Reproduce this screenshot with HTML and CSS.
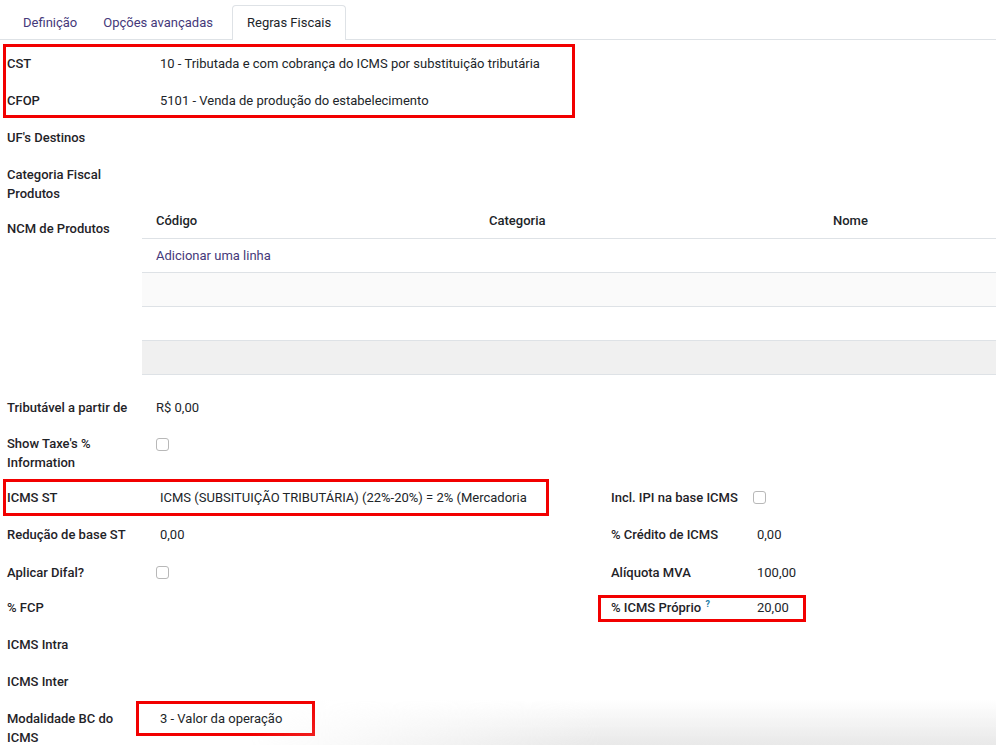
FILE: index.html
```html
<!DOCTYPE html>
<html lang="pt-BR">
<head>
    <meta charset="UTF-8">
    <title>Posição Fiscal - Regras Fiscais</title>
    <link rel="stylesheet" href="styles.css">
</head>
<body>

    <ul class="tabs">
        <li class="tab">Definição</li>
        <li class="tab">Opções avançadas</li>
        <li class="tab active">Regras Fiscais</li>
    </ul>

    <div class="sheet">
        <div class="row">
            <div class="label">CST</div>
            <div class="value text">10 - Tributada e com cobrança do ICMS por substituição tributária</div>
        </div>
        <div class="row">
            <div class="label">CFOP</div>
            <div class="value text">5101 - Venda de produção do estabelecimento</div>
        </div>
        <div class="row">
            <div class="label">UF's Destinos</div>
            <div class="value"></div>
        </div>
        <div class="row two">
            <div class="label">Categoria Fiscal Produtos</div>
            <div class="value"></div>
        </div>
        <div class="row ncm">
            <div class="label">NCM de Produtos</div>
            <div class="value">
                <table class="lines">
                    <thead>
                        <tr>
                            <th class="col-code">Código</th>
                            <th class="col-cat">Categoria</th>
                            <th>Nome</th>
                        </tr>
                    </thead>
                    <tbody>
                        <tr><td colspan="3"><a class="add-line">Adicionar uma linha</a></td></tr>
                        <tr class="light"><td colspan="3"></td></tr>
                        <tr><td colspan="3"></td></tr>
                        <tr class="grey"><td colspan="3"></td></tr>
                    </tbody>
                </table>
            </div>
        </div>
        <div class="row">
            <div class="label">Tributável a partir de</div>
            <div class="value text flush">R$ 0,00</div>
        </div>
        <div class="row two snug">
            <div class="label">Show Taxe's % Information</div>
            <div class="value"><span class="check"></span></div>
        </div>

        <div class="split">
            <div class="group left">
                <div class="row">
                    <div class="label">ICMS ST</div>
                    <div class="value text clip">ICMS (SUBSITUIÇÃO TRIBUTÁRIA) (22%-20%) = 2% (Mercadoria com substituição tributária)</div>
                </div>
                <div class="row h38">
                    <div class="label">Redução de base ST</div>
                    <div class="value text">0,00</div>
                </div>
                <div class="row h35">
                    <div class="label">Aplicar Difal?</div>
                    <div class="value"><span class="check"></span></div>
                </div>
                <div class="row">
                    <div class="label">% FCP</div>
                    <div class="value"></div>
                </div>
                <div class="row">
                    <div class="label">ICMS Intra</div>
                    <div class="value"></div>
                </div>
                <div class="row">
                    <div class="label">ICMS Inter</div>
                    <div class="value"></div>
                </div>
                <div class="row two">
                    <div class="label">Modalidade BC do ICMS</div>
                    <div class="value text">3 - Valor da operação</div>
                </div>
            </div>
            <div class="group right">
                <div class="row">
                    <div class="label nowrap">Incl. IPI na base ICMS</div>
                    <div class="value"><span class="check"></span></div>
                </div>
                <div class="row h38">
                    <div class="label">% Crédito de ICMS</div>
                    <div class="value text">0,00</div>
                </div>
                <div class="row h35">
                    <div class="label">Alíquota MVA</div>
                    <div class="value text">100,00</div>
                </div>
                <div class="row">
                    <div class="label nowrap">% ICMS Próprio <sup class="help">?</sup></div>
                    <div class="value text">20,00</div>
                </div>
            </div>
        </div>
    </div>

    <!-- annotation boxes drawn over the form -->
    <div class="mark" style="left: 3px; top: 44px; width: 572px; height: 74px;"></div>
    <div class="mark" style="left: 3px; top: 479px; width: 546px; height: 37px;"></div>
    <div class="mark" style="left: 598px; top: 595px; width: 208px; height: 27px;"></div>
    <div class="mark" style="left: 136px; top: 701px; width: 179px; height: 35px;"></div>

    <div class="fade"></div>

</body>
</html>
```

FILE: styles.css
```css
* {
    box-sizing: border-box;
}
html, body {
    margin: 0;
    background: #fff;
    height: 745px;
    overflow: hidden;
}
body {
    font-family: Roboto, "Noto Sans", sans-serif;
    font-size: 13px;
    line-height: 19px;
    color: #212529;
    position: relative;
}

.tabs {
    list-style: none;
    margin: 0;
    padding: 5px 0 0 8px;
    display: flex;
    border-bottom: 1px solid #dee2e6;
    height: 40px;
}
.tab {
    padding: 0 14px;
    height: 34px;
    line-height: 33px;
    color: #45397a;
    border: 1px solid transparent;
    border-bottom: none;
}
.tab:nth-child(2) {
    padding: 0 18px 0 10px;
}
.tab.active {
    color: #212529;
    border-color: #dee2e6;
    border-radius: 4px 4px 0 0;
    background: #fff;
    height: 35px;
}

.sheet {
    padding-top: 6px;
}

.row {
    display: grid;
    grid-template-columns: 156px 1fr;
    min-height: 37px;
}
.row.h38 {
    min-height: 38px;
}
.row.h35 {
    min-height: 35px;
}
.label {
    padding: 8px 18px 0 7px;
    font-weight: 500;
    color: #1f2328;
}
.nowrap {
    white-space: nowrap;
}
.two {
    min-height: 54px;
}
.two.snug {
    min-height: 53px;
}
.two.snug .label {
    padding-top: 7px;
}
.value {
    padding-top: 8px;
    min-width: 0;
}
.value.text {
    padding-left: 4px;
}
.value.flush {
    padding-left: 0;
}
.clip {
    white-space: nowrap;
    overflow: hidden;
}

.check {
    display: inline-block;
    width: 13px;
    height: 13px;
    margin-top: 3px;
    border: 1px solid #b8b8b8;
    border-radius: 3px;
    background: #fff;
}

.ncm {
    margin-bottom: 15px;
}
.ncm .value {
    padding-top: 0;
    margin-left: -14px;
}
table.lines {
    width: 100%;
    border-collapse: collapse;
}
.lines th {
    font-weight: 500;
    text-align: left;
    padding: 0 14px 8px;
    line-height: 19px;
    border-bottom: 1px solid #dee2e6;
}
.lines .col-code {
    width: 333px;
}
.lines .col-cat {
    width: 344px;
}
.lines td {
    height: 34px;
    padding: 0 14px;
    border-bottom: 1px solid #dee2e6;
}
.lines tr.light td {
    background: #fafafa;
}
.lines tr.grey td {
    background: #f0f0f0;
}
.add-line {
    color: #45397a;
}

.split {
    display: grid;
    grid-template-columns: 604px 1fr;
}
.left .row {
    grid-template-columns: 156px 374px;
}
.right .row {
    grid-template-columns: 149px 1fr;
}
.right .label {
    padding-right: 8px;
}
.help {
    color: #1a7ca8;
    font-size: 9px;
    font-weight: 700;
    vertical-align: top;
    line-height: 12px;
    margin-left: 1px;
}

.mark {
    position: absolute;
    border: 3px solid #f20000;
}
.fade {
    position: absolute;
    left: 0;
    right: 0;
    bottom: 0;
    height: 45px;
    background: linear-gradient(to bottom, rgba(230, 230, 230, 0), rgba(230, 230, 230, 0.9));
    -webkit-mask-image: linear-gradient(to right, transparent 250px, #000 600px);
    mask-image: linear-gradient(to right, transparent 250px, #000 600px);
    pointer-events: none;
}
```
